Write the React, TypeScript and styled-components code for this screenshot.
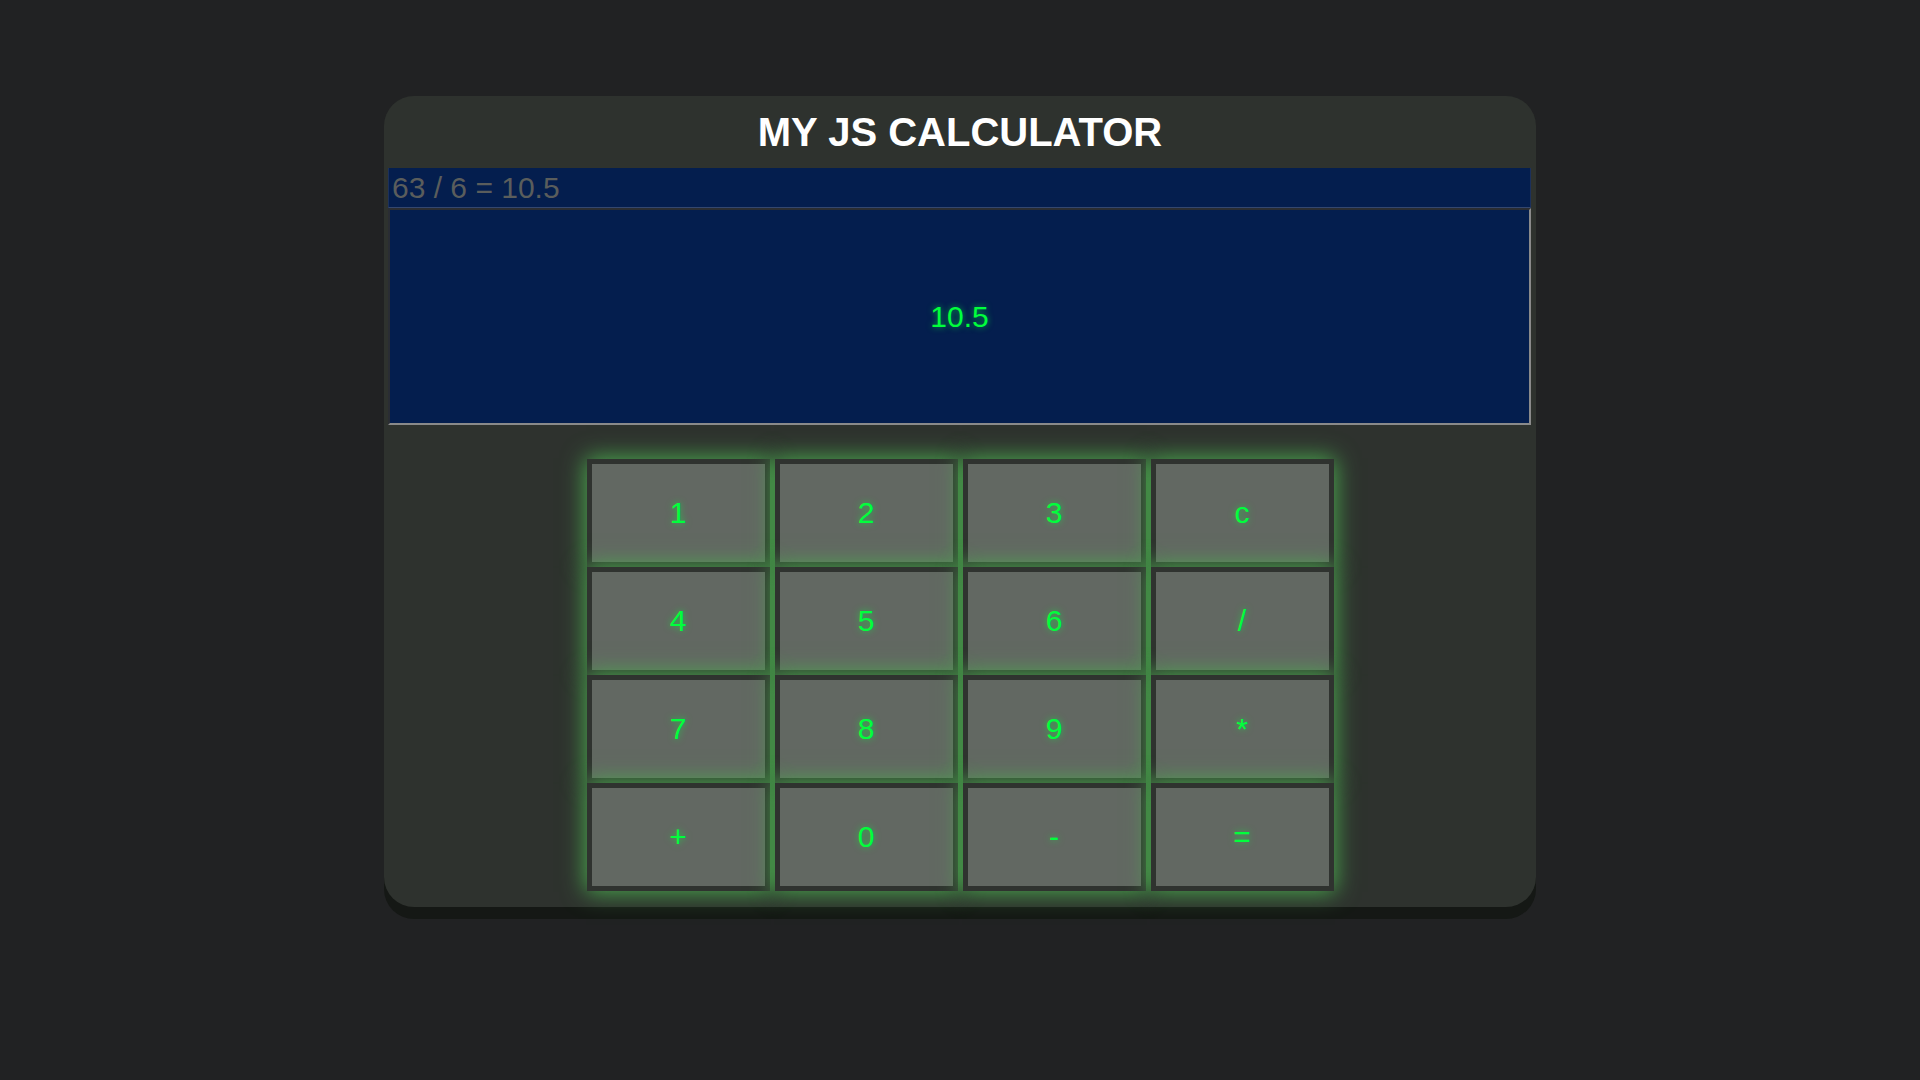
import styled, { createGlobalStyle } from "styled-components";

const GlobalStyle = createGlobalStyle`
  html,
  body {
    margin: 0;
    padding: 0;
    background: #212223;
    font-family: "Liberation Sans", Arial, Helvetica, sans-serif;
  }
`;

const Page = styled.div`
  min-height: 1080px;
  padding-top: 96px;
  box-sizing: border-box;
  display: flex;
  justify-content: center;
  align-items: flex-start;
`;

const Calculator = styled.div`
  width: 1152px;
  background: #2e322e;
  border-radius: 30px;
  box-shadow: 0 12px 0 #151815;
  padding-bottom: 16px;
  display: flex;
  flex-direction: column;
`;

const Title = styled.h1`
  margin: 0;
  height: 72px;
  display: flex;
  align-items: center;
  justify-content: center;
  color: #ffffff;
  font-size: 40px;
  font-weight: 700;
`;

const Screen = styled.div`
  margin: 0 5px 0 4px;
  display: flex;
  flex-direction: column;
`;

const History = styled.div`
  height: 40px;
  box-sizing: border-box;
  background: #041e4e;
  border: 1px solid #1c305a;
  border-top: none;
  border-bottom: 1px solid #34476f;
  padding: 0 3px;
  display: flex;
  align-items: center;
  color: #5a5d5c;
  font-size: 30px;
`;

const Output = styled.div`
  height: 217px;
  box-sizing: border-box;
  background: #041e4e;
  border-style: solid;
  border-width: 2px;
  border-color: #2a2d33 #8a8a8a #8a8a8a #2a2d33;
  display: flex;
  align-items: center;
  justify-content: center;
  color: #00ff3c;
  font-size: 30px;
  text-shadow: 0 0 6px rgba(0, 255, 60, 0.6);
`;

const Keypad = styled.div`
  margin-top: 34px;
  align-self: center;
  display: grid;
  grid-template-columns: repeat(4, 183px);
  grid-auto-rows: 108px;
  column-gap: 5px;
`;

const Key = styled.button`
  box-sizing: border-box;
  border: 5px solid #2f332f;
  background: #626862;
  color: #00ff3c;
  font-family: "Liberation Sans", Arial, Helvetica, sans-serif;
  font-size: 30px;
  padding: 0;
  text-shadow: 0 0 7px rgba(0, 255, 60, 0.6);
  box-shadow: 0 0 22px 1px #4caf50;
  cursor: pointer;
`;

const keys = ["1", "2", "3", "c", "4", "5", "6", "/", "7", "8", "9", "*", "+", "0", "-", "="];

export default function App() {
  return (
    <>
      <GlobalStyle />
      <Page>
        <Calculator>
          <Title>MY JS CALCULATOR</Title>
          <Screen>
            <History>63 / 6 = 10.5</History>
            <Output>10.5</Output>
          </Screen>
          <Keypad>
            {keys.map(k => (
              <Key key={k}>{k}</Key>
            ))}
          </Keypad>
        </Calculator>
      </Page>
    </>
  );
}
